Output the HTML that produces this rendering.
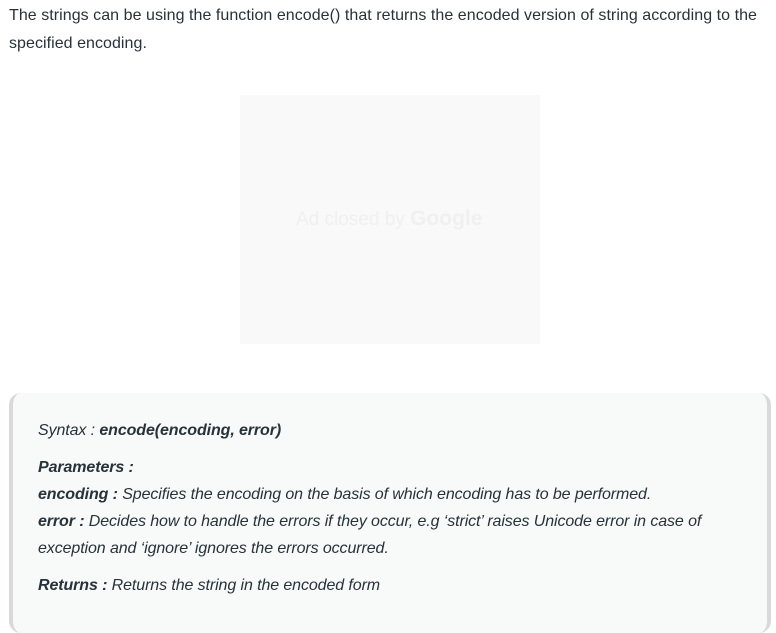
<!DOCTYPE html>
<html><head><meta charset="utf-8"><style>
html,body{margin:0;padding:0;background:#fff;width:776px;height:623px;overflow:hidden}
body{font-family:"Liberation Sans",sans-serif;color:#273239;font-size:16px}
.p{position:absolute;left:9px;top:2px;width:766px;line-height:28px;letter-spacing:0.05px;word-spacing:0px}
.ad{position:absolute;left:240px;top:95px;width:300px;height:249px;background:#f9f9f9}
.ad span{position:absolute;left:56px;top:112px;font-size:19px;color:#f0f0f0;white-space:nowrap}
.ad b{font-size:21px;font-weight:bold}
.box{position:absolute;left:9px;top:393px;width:754px;height:240px;background:#f8f9f9;border-left:4px solid #d9d9d9;border-right:4px solid #d9d9d9;border-radius:12px;box-sizing:content-box}
.in{position:absolute;left:25px;top:24px;font-style:italic;line-height:27px;font-size:16px;letter-spacing:-0.1px;white-space:nowrap}
.in b{font-weight:bold}
.in div{margin:0}
</style></head><body>
<div class="p">The strings can be using the function encode() that returns the encoded version of string according to the specified encoding.</div>
<div class="ad"><span>Ad closed by <b>Google</b></span></div>
<div class="box"><div class="in">
<div>Syntax : <b>encode(encoding, error)</b></div>
<div style="margin-top:10px"><b>Parameters :</b></div>
<div><b>encoding :</b> Specifies the encoding on the basis of which encoding has to be performed.</div>
<div><b>error :</b> Decides how to handle the errors if they occur, e.g ‘strict’ raises Unicode error in case of</div>
<div>exception and ‘ignore’ ignores the errors occurred.</div>
<div style="margin-top:10px"><b>Returns :</b> Returns the string in the encoded form</div>
</div></div>
</body></html>
